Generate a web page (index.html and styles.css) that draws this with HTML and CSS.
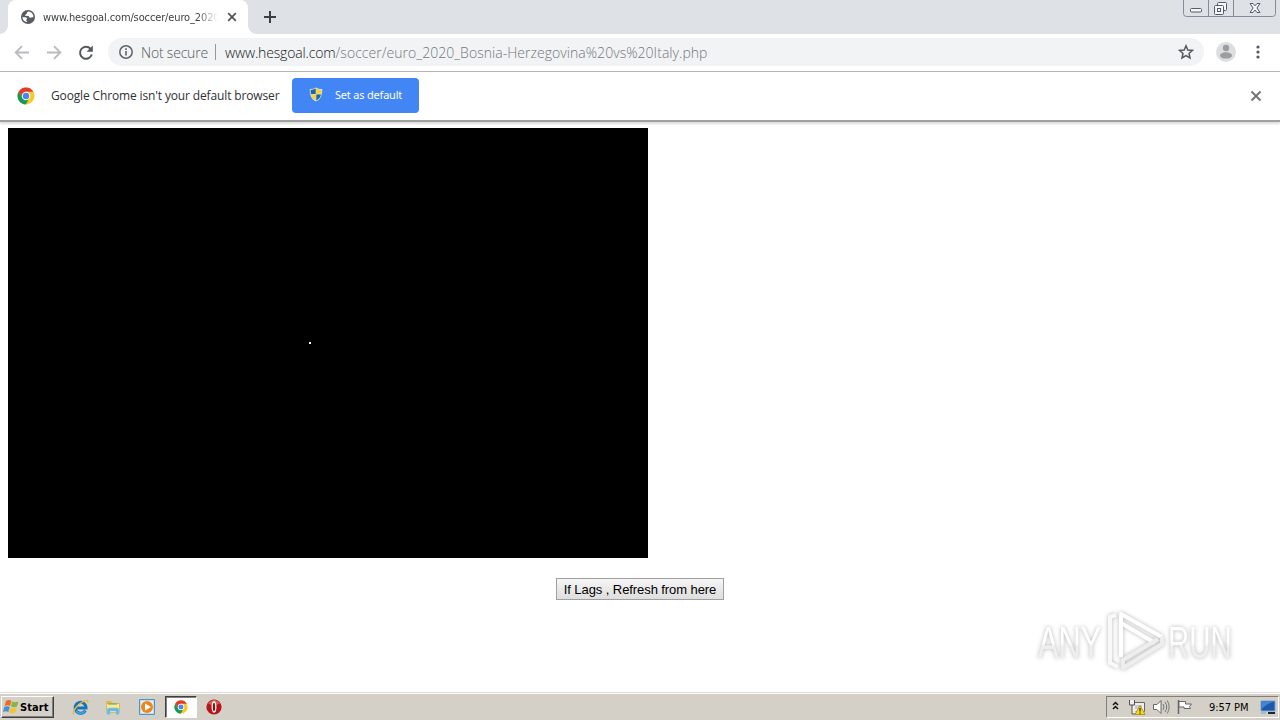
FILE: index.html
```html
<!DOCTYPE html>
<html lang="en">
<head>
<meta charset="utf-8">
<title>www.hesgoal.com</title>
<link rel="stylesheet" href="styles.css">
</head>
<body>
<svg class="defs" width="0" height="0">
  <symbol id="chrome" viewBox="0 0 18 18">
    <circle cx="9" cy="9" r="8.5" fill="#fbc926"/>
    <path d="M9 9 1.6 4.8A8.5 8.5 0 0 1 16.4 4.8H9z" fill="#e33b2e"/>
    <path d="M1.6 4.8 5.4 11 9 9 9 4.8z" fill="#e33b2e"/>
    <path d="M1.6 4.8A8.5 8.5 0 0 0 8.8 17.5L11.6 12.5 5.6 11.2z" fill="#149b58"/>
    <circle cx="9" cy="9" r="4.2" fill="#fff"/>
    <circle cx="9" cy="9" r="3.2" fill="#4688ef"/>
  </symbol>
</svg>
<header class="tabstrip">
  <div class="tab">
    <svg class="globe" width="14" height="14" viewBox="0 0 14 14"><circle cx="7" cy="7" r="7" fill="#585c60"/><path d="M7.4 1.4C5.5 2 6.2 3.4 5.4 4.1 4.8 4.8 4 4.6 4 5.7L7 6c1.4.2 1 1.7 2.2 1.8 1 .1 1.4-.9 3.2-.6A5.5 5.5 0 0 0 7.4 1.4zM1.5 7.1c1.8.3 3.9.1 4.4 1.2.4.9-.7 1.1-.6 2 0 .7.8.8.7 2A5.5 5.5 0 0 1 1.5 7.1z" fill="#fff"/></svg>
    <span class="tab-title">www.hesgoal.com/soccer/euro_2020</span>
    <svg class="tab-close" width="10" height="10" viewBox="0 0 10 10"><path d="M1.2 1.2l7.6 7.6m0-7.6L1.2 8.8" stroke="#4f5357" stroke-width="1.7"/></svg>
  </div>
  <svg class="newtab" width="12" height="12" viewBox="0 0 12 12"><path d="M6 0v12M0 6h12" stroke="#3c4043" stroke-width="2"/></svg>
  <svg class="winctl" width="94" height="18" viewBox="0 0 94 18">
    <path d="M.5 0v13.5q0 3 3 3h86q3 0 3-3V0M25.500 0v16M50.500 0v16" fill="none" stroke="#858b98"/>
    <g fill="#f5f6f8" stroke="#565b69">
      <rect x="7.500" y="8.500" width="11" height="3.500" rx="1"/>
      <rect x="34.500" y="2.500" width="9" height="8" rx="1"/><rect x="31.500" y="5.500" width="9" height="9" rx="1"/><rect x="34.500" y="8.500" width="3" height="3"/>
      <path d="M67 3.500h3l2 2.300 2-2.300h3L73.900 8l3.100 4.500h-3l-2-2.400-2 2.400h-3L70.100 8z"/>
    </g>
  </svg>
</header>
<nav class="toolbar">
  <svg class="nav-icons" width="108" height="37" viewBox="0 0 108 37" fill="none">
    <path d="M29 18.500H16m6-6.300L15.700 18.500l6.300 6.300M47 18.500h13m-6-6.300 6.300 6.300-6.300 6.300" stroke="#b8babd" stroke-width="1.800"/>
    <path d="M90.600 14.800A6 6 0 1 0 91.800 20.500" stroke="#55585c" stroke-width="2"/><path d="M92.800 11.500v6.200h-6.200z" fill="#55585c"/>
  </svg>
  <div class="omnibox">
    <svg class="info" width="14" height="14" viewBox="0 0 14 14"><circle cx="7" cy="7" r="6.200" fill="none" stroke="#5f6368" stroke-width="1.500"/><path d="M7 6v4.500M7 3.300v1.600" stroke="#5f6368" stroke-width="1.600"/></svg>
    <span class="insecure">Not secure</span>
    <i class="sep"></i>
    <span class="host">www.hesgoal.com</span><span class="path">/soccer/euro_2020_Bosnia-Herzegovina%20vs%20Italy.php</span>
    <svg class="star" width="16" height="16" viewBox="0 0 16 16"><path d="M8 1.800l1.800 4.200 4.700.4-3.500 3.100 1 4.500L8 11.600 4 14l1-4.500L1.500 6.400l4.700-.4z" fill="none" stroke="#55595e" stroke-width="1.500"/></svg>
  </div>
  <svg class="avatar" width="20" height="20" viewBox="0 0 20 20"><circle cx="10" cy="10" r="10" fill="#dddedf"/><circle cx="10" cy="6" r="3.200" fill="#9b9d9f"/><ellipse cx="10" cy="13.400" rx="6" ry="3.200" fill="#9b9d9f"/></svg>
  <svg class="dots" width="4" height="14" viewBox="0 0 4 14" fill="#55595e"><circle cx="2" cy="2" r="1.600"/><circle cx="2" cy="7" r="1.600"/><circle cx="2" cy="12" r="1.600"/></svg>
</nav>
<section class="infobar">
  <svg class="chrome-logo" width="18" height="18"><use href="#chrome"/></svg>
  <span class="message">Google Chrome isn't your default browser</span>
  <div class="set-default">
    <svg width="14" height="15" viewBox="0 0 14 15"><path d="M7 .5Q10 2.200 13.300 2q.5 9.500-6.300 12.600Q.2 11.500.7 2 4 2.200 7 .5z" fill="#d7dfd0"/><path d="M6.700 1.600V7H2Q1.500 5 1.700 3 4.500 3 6.700 1.600z" fill="#1f66a8"/><path d="M7.300 1.600Q9.500 3 12.300 3q.2 2-.2 4H7.300z" fill="#f8d331"/><path d="M2 7.600h4.700v5.800Q2.800 11.500 2 7.600z" fill="#f8d331"/><path d="M12 7.600H7.300v5.800q3.900-1.900 4.700-5.800z" fill="#1f66a8"/></svg>
    <span>Set as default</span>
  </div>
  <svg class="bar-close" width="12" height="12" viewBox="0 0 12 12"><path d="M1.500 1.500l9 9m0-9-9 9" stroke="#707377" stroke-width="1.900"/></svg>
</section>
<main class="page">
  <div class="player"><i class="speck"></i></div>
  <div class="refresh-row"><div class="refresh"><span>If Lags , Refresh from here</span></div></div>
  <svg class="watermark" width="210" height="76" viewBox="0 0 210 76">
    <defs><linearGradient id="fade" x2="0" y2="1"><stop offset=".5" stop-color="#fff"/><stop offset=".58" stop-color="#efefef"/></linearGradient></defs>
    <g class="mark" fill="url(#fade)">
      <text transform="translate(8 56) scale(.7 1)">ANY</text>
      <text transform="translate(138 56) scale(.67 1)">RUN</text>
      <g fill="none" stroke-width="4" stroke-linejoin="round"><path d="M86 13L80 15v46l8 4" stroke="#f9f9f9"/><path d="M91 55V12l41 23" stroke="#fff"/><path d="M91 21l34 20" stroke="#fff"/><path d="M132 35v7L93 66v-8l35-21" stroke="#eee"/></g>
    </g>
  </svg>
</main>
<footer class="taskbar">
  <div class="start">
    <svg width="17" height="16" viewBox="0 0 17 16"><path d="M3 2q3-2 5.500 0L7 7Q4.500 5.500 1.600 7z" fill="#ed6a28"/><path d="M9.300 2.500q3 1.600 6.200 0L14 7.500q-3 1.600-6 0z" fill="#80b83c"/><path d="M1.300 8q3-1.500 5.400 0L5.300 13Q3 11.500 0 13z" fill="#438fd0"/><path d="M7.600 8.400q3 1.600 6.100 0L12.300 13.500q-3 1.600-6.100 0z" fill="#f5c234"/></svg>
    <span>Start</span>
  </div>
  <svg class="quick ie" width="17" height="17" viewBox="0 0 17 17" fill="none"><path d="M13.300 11.500A5.500 5.500 0 1 1 14 9H4" stroke="#1672bd" stroke-width="3"/><path d="M13 12A5.500 5.500 0 0 1 4 12" stroke="#3ca8e4" stroke-width="1.500"/><path d="M2 15.500C-.5 13 5 6 11 2.700c4-2.300 5.500-1.500 4.600 1.300" stroke="#e3ba43" stroke-width="1.400"/></svg>
  <svg class="quick folder" width="16" height="17" viewBox="0 0 16 17"><path d="M1 2h5l1 2h8v10H1z" fill="#dfb94f"/><path d="M2 5h12v8H2z" fill="#f9e79b"/><path d="M3 5h9" stroke="#56a558"/><path d="M2 15.500V11q0-2 2-2h8q2 0 2 2v4.500h-3V12H5v3.500z" fill="#64b7df" stroke="#95cee5" stroke-width=".7"/></svg>
  <svg class="quick media" width="16" height="16" viewBox="0 0 16 16"><path d="M.5.500h15v15H.5z" fill="#bdddf0" stroke="#4c94c8"/><path d="M2 2h12v12H2z" fill="#e3f0f8"/><circle cx="8" cy="8" r="6" fill="#ee8619"/><path d="M6 4.500v7L12 8z" fill="#fff"/></svg>
  <div class="active-task"><svg width="14" height="14"><use href="#chrome"/></svg></div>
  <svg class="quick opera" width="16" height="16" viewBox="0 0 16 16"><circle cx="8" cy="8" r="7.600" fill="#b71619"/><path d="M2 4.500a7 7 0 0 1 12 0Q8 8 2 4.500z" fill="#d35a57"/><ellipse cx="8" cy="8" rx="1.800" ry="5" fill="#980d12" stroke="#fff" stroke-width="1.300"/></svg>
  <div class="tray">
    <svg width="92" height="20" viewBox="0 0 92 20" fill="none">
      <path d="M6 8l2.500-2.500L11 8M6 12l2.500-2.500L11 12" stroke="#111" stroke-width="1.500"/>
      <path d="M25.500 5.500h12v9h-12z" fill="#eee" stroke="#666"/><path d="M28 8h7v4h-7z" fill="#c9c9c9"/><path d="M22.500 3v5h5V3M25 8v9h5" fill="#eee" stroke="#555"/><path d="M33 8.500l5 9h-10z" fill="#f7dd21" stroke="#b79319"/><path d="M33 11v3.500m0 1v1.200" stroke="#222" stroke-width="1.200"/>
      <path d="M46.500 7.500H50l4-4v13l-4-4h-3.500z" fill="#fff" stroke="#666"/><path d="M56 7q2 3 0 6m2-8q3.500 5 0 10m2.200-11.500q4 6.500 0 13" stroke="#777"/>
      <path d="M71.500 3v14" stroke="#666" stroke-width="1.500"/><path d="M72 4.500h6.500V7h6l-2 2.500 1 2H77V10h-5z" fill="#fff" stroke="#666"/>
    </svg>
    <span class="clock">9:57 PM</span>
    <svg class="desktop" width="16" height="15" viewBox="0 0 16 15"><path d="M1 1h14v10H1z" fill="#1f57ab" stroke="#72a4d7"/><path d="M2 2h11Q6 4 2 9z" fill="#4387d1"/><path d="M8 13h7" stroke="#222" stroke-width="2"/><path d="M1 13h5" stroke="#8fb4da" stroke-width="1.500"/></svg>
  </div>
</footer>
</body>
</html>
```
FILE: styles.css
```css
* { box-sizing: border-box; }
body { margin: 0; width: 1280px; height: 720px; overflow: hidden; display: flex; flex-direction: column; background: #fff; font-family: "Noto Sans", sans-serif; white-space: nowrap; }
svg { display: block; flex: none; }
.defs { position: absolute; }
.tabstrip { height: 34px; flex: none; background: #dee1e6; display: flex; padding-left: 8px; }
.tab { width: 240px; background: #fff; border-radius: 8px 8px 0 0; display: flex; align-items: center; padding-left: 13px; position: relative; }
.tab::before, .tab::after { content: ""; position: absolute; bottom: 0; width: 8px; height: 8px; }
.tab::before { left: -8px; background: radial-gradient(circle at 0 0, transparent 7.5px, #fff 8px); }
.tab::after { right: -8px; background: radial-gradient(circle at 100% 0, transparent 7.5px, #fff 8px); }
.tab-title { width: 175px; margin-left: 8px; overflow: hidden; font-family: "DejaVu Sans Condensed", "DejaVu Sans", sans-serif; font-stretch: condensed; font-size: 11px; letter-spacing: -.13px; color: #3d4043; -webkit-mask-image: linear-gradient(90deg, #000 88%, transparent); mask-image: linear-gradient(90deg, #000 88%, transparent); }
.tab-close { margin-left: 9px; }
.newtab { margin: 11px 0 0 16px; }
.winctl { margin-left: auto; margin-right: 3px; }
.toolbar { height: 38px; flex: none; border-bottom: 1px solid #b4b5b7; display: flex; align-items: center; padding-bottom: 1px; }
.omnibox { width: 1096px; height: 28px; border-radius: 14px; background: #f1f3f4; display: flex; align-items: center; padding-left: 11px; font-size: 14px; color: #74787c; font-family: "Open Sans", "Noto Sans", sans-serif; font-weight: 300; }
.insecure { width: 67px; margin-left: 8px; color: #55595e; letter-spacing: -.2px; }
.sep { width: 1px; height: 16px; margin: 0 9px 0 7px; background: #96999c; }
.host { color: #17191c; letter-spacing: -.15px; }
.path { letter-spacing: .04px; }
.star { margin-left: auto; margin-right: 10px; }
.avatar { margin-left: 12px; }
.dots { margin-left: 20px; }
.infobar { height: 50px; flex: none; display: flex; align-items: center; padding: 0 0 1px 17px; border-bottom: 2px solid #aaa; border-bottom-color: #a0a0a0; position: relative; box-shadow: 0 2px 2px #ddd; }
.message { width: 229px; margin-left: 16px; font-size: 12px; letter-spacing: -.14px; color: #303133; font-family: "Open Sans", sans-serif; }
.set-default { width: 127px; height: 35px; margin-left: 12px; border-radius: 4px; background: #4285f4; color: #fff; display: flex; align-items: center; padding: 0 0 2px 17px; gap: 12px; font-size: 11px; letter-spacing: -.2px; }
.bar-close { margin-left: auto; margin-right: 18px; }
.page { height: 570px; flex: none; padding: 6px 8px 0; position: relative; }
.player { width: 640px; height: 430px; background: #000; padding: 214px 0 0 301px; }
.speck { display: block; width: 2px; height: 2px; background: #fff; }
.refresh-row { display: flex; justify-content: center; margin-top: 20px; }
.refresh { width: 168px; height: 22px; border: 1px solid #a0a0a0; background: linear-gradient(#f5f5f5, #dedede); display: flex; justify-content: center; align-items: center; font: 13px "Liberation Sans", sans-serif; letter-spacing: -.08px; color: #000; }
.watermark { position: absolute; left: 1030px; top: 480px; overflow: visible; }
.mark { filter: drop-shadow(0 0 2px #b5b5b5); font: 44px "Liberation Sans", sans-serif; }
.taskbar { height: 28px; flex: none; background: #d4d0c8; border-top: 1px solid #e1ded8; box-shadow: inset 0 1px #fff; display: flex; align-items: center; padding: 1px 1px 0; font-family: "DejaVu Sans Condensed", "DejaVu Sans", sans-serif; font-stretch: condensed; font-size: 11px; color: #000; }
.start { width: 53px; height: 22px; border: 1px solid; border-color: #fff #404040 #404040 #fff; box-shadow: inset -1px -1px #808080; display: flex; align-items: center; padding-left: 1px; font-weight: bold; letter-spacing: .1px; }
.ie { margin-left: 18px; }
.folder { margin-left: 16px; }
.media { margin-left: 18px; }
.active-task { width: 32px; height: 22px; margin-left: 10px; border: 1px solid; border-color: #404040 #fff #fff #404040; box-shadow: inset 1px 1px #808080; background: #fff; display: flex; align-items: center; justify-content: center; }
.opera { margin-left: 9px; }
.tray { width: 173px; height: 22px; margin-left: auto; border: 1px solid; border-color: #808080 #fff #fff #808080; display: flex; align-items: center; }
.clock { width: 40px; margin-left: 10px; letter-spacing: -.05px; }
.desktop { margin-left: 11px; }
```
